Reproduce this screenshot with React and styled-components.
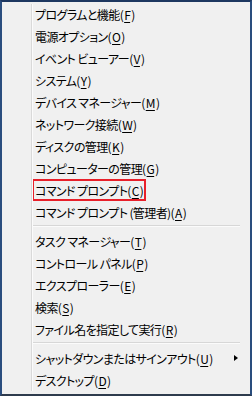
import styled, { createGlobalStyle } from 'styled-components'

const Global = createGlobalStyle`
    html, body {
        margin: 0;
        padding: 0;
        background: #f0f0f0;
    }
`

const Menu = styled.div`
    box-sizing: border-box;
    width: 252px;
    height: 396px;
    background: #f0f0f0;
    border-style: solid;
    border-color: #2a4d7e;
    border-width: 2px 2px 2px 2px;
    border-top-color: #1d3760;
    border-bottom-color: #2e3b4d;
    padding: 1px 2px 4px 2px;
    font-family: "Noto Sans CJK JP", "Noto Sans", sans-serif;
    font-size: 12px;
    font-feature-settings: "palt";
    color: #000;
    position: relative;
`

const Gutter = styled.div`
    position: absolute;
    left: 29px;
    top: 2px;
    bottom: 3px;
    width: 1px;
    background: #d9d9d9;
    box-shadow: 1px 0 0 #fbfbfb;
`

const Row = styled.div`
    display: flex;
    align-items: center;
    height: 22px;
    padding-left: 31px;
    padding-right: 10px;
    white-space: nowrap;
`

const Label = styled.span`
    display: inline-flex;
    align-items: center;
    height: 22px;
    letter-spacing: -0.6px;
    ${(p) => p.$marked && `
        margin-left: -3px;
        padding: 0 3px 0 3px;
        box-shadow: inset 0 0 0 2px #e8202a;
    `}
`

const Key = styled.u`
    text-decoration-thickness: 1px;
    text-underline-offset: 2px;
    margin: 0 1px;
`

const Arrow = styled.span`
    margin-left: auto;
    width: 0;
    height: 0;
    border-top: 3.5px solid transparent;
    border-bottom: 3.5px solid transparent;
    border-left: 4px solid #000;
    margin-right: 0;
`

const Separator = styled.div`
    height: 1px;
    margin: 2px 8px 3px 28px;
    background: #d7d7d7;
    border-bottom: 1px solid #fbfbfb;
`

const groups = [
    [
        ['プログラムと機能', 'F'],
        ['電源オプション', 'O'],
        ['イベント ビューアー', 'V'],
        ['システム', 'Y'],
        ['デバイス マネージャー', 'M'],
        ['ネットワーク接続', 'W'],
        ['ディスクの管理', 'K'],
        ['コンピューターの管理', 'G'],
        ['コマンド プロンプト', 'C', true],
        ['コマンド プロンプト (管理者)', 'A'],
    ],
    [
        ['タスク マネージャー', 'T'],
        ['コントロール パネル', 'P'],
        ['エクスプローラー', 'E'],
        ['検索', 'S'],
        ['ファイル名を指定して実行', 'R'],
    ],
    [
        ['シャットダウンまたはサインアウト', 'U', false, true],
        ['デスクトップ', 'D'],
    ],
]

function Item({ text, hotkey, marked, submenu }) {
    return (
        <Row>
            <Label $marked={marked}>
                {text}(<Key>{hotkey}</Key>)
            </Label>
            {submenu && <Arrow />}
        </Row>
    )
}

export default function App() {
    return (
        <>
            <Global />
            <Menu>
                <Gutter />
                {groups.map((items, gi) => (
                    <div key={gi}>
                        {gi > 0 && <Separator />}
                        {items.map(([text, hotkey, marked, submenu]) => (
                            <Item key={text} text={text} hotkey={hotkey} marked={marked} submenu={submenu} />
                        ))}
                    </div>
                ))}
            </Menu>
        </>
    )
}
